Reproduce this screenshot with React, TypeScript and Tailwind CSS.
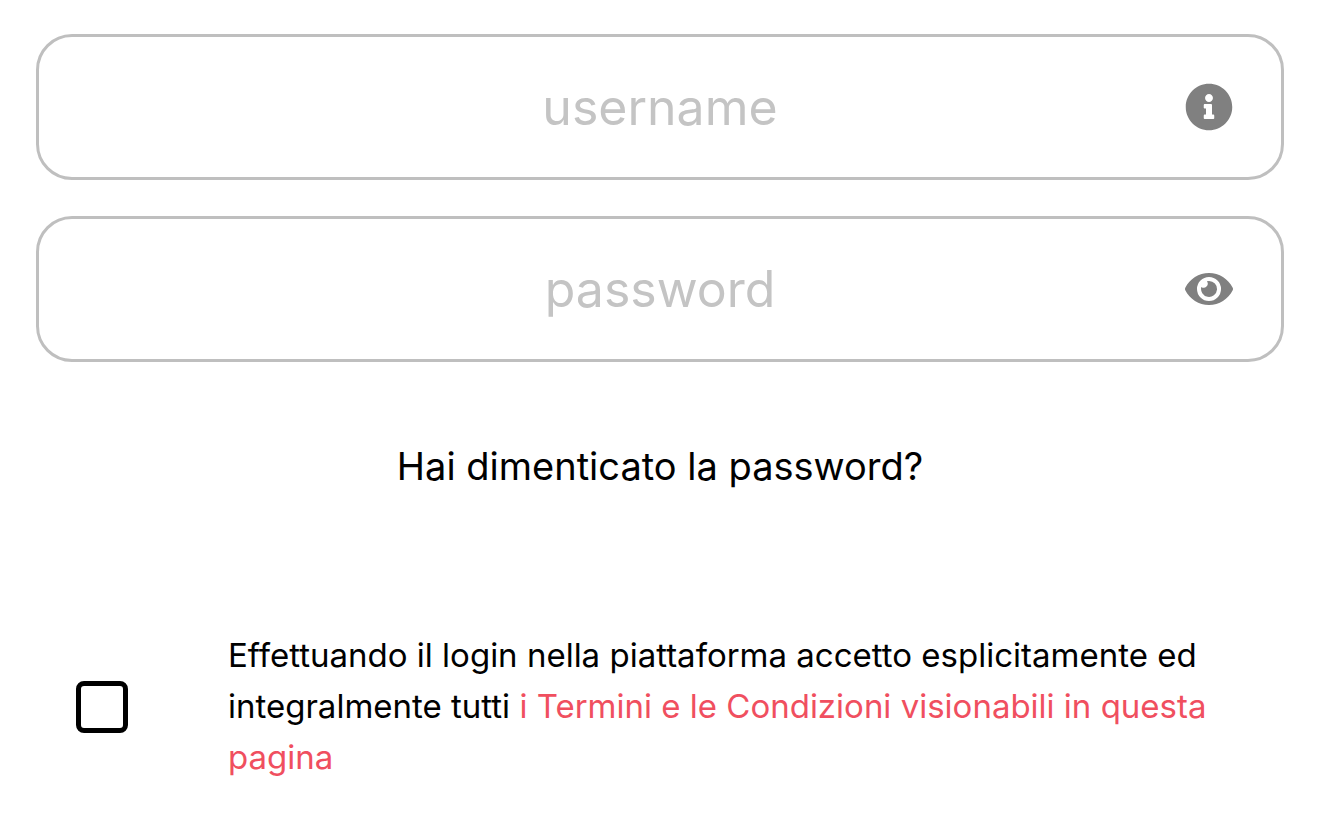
import { useState } from "react";
import { FaEye, FaInfoCircle } from "react-icons/fa";

const inputClass =
  "h-full w-full rounded-[36px] border-[3px] border-[#bfbfbf] bg-white px-24 text-center text-[50px] text-black outline-none placeholder:text-[#c4c4c4]";

export default function App() {
  const [showPassword, setShowPassword] = useState(false);

  return (
    <form className="bg-white px-9 pt-[34px] font-['Inter',sans-serif] text-black">
      <div className="relative h-[146px]">
        <input type="text" placeholder="username" aria-label="username" className={inputClass} />
        <button type="button" aria-label="info" className="absolute inset-y-0 right-[51px] text-[#808080]">
          <FaInfoCircle className="size-12" />
        </button>
      </div>

      <div className="relative mt-9 h-[146px]">
        <input
          type={showPassword ? "text" : "password"}
          placeholder="password"
          aria-label="password"
          className={inputClass}
        />
        <button
          type="button"
          aria-label="mostra password"
          onClick={() => setShowPassword(!showPassword)}
          className="absolute inset-y-0 right-[51px] text-[#808080]"
        >
          <FaEye className="size-12" />
        </button>
      </div>

      <div className="mt-20 text-center">
        <a href="#" className="text-[38px] leading-12">
          Hai dimenticato la password?
        </a>
      </div>

      <div className="mt-[140px] flex items-center pb-14 pl-10">
        <input
          id="terms"
          type="checkbox"
          className="size-[52px] shrink-0 appearance-none rounded-lg border-[5px] border-black checked:bg-black"
        />
        <label htmlFor="terms" className="ml-[100px] text-[33px] leading-[51px]">
          Effettuando il login nella piattaforma accetto esplicitamente ed integralmente tutti{" "}
          <a href="#" className="text-[#f04f5f]">
            i Termini e le Condizioni visionabili in questa pagina
          </a>
        </label>
      </div>
    </form>
  );
}
